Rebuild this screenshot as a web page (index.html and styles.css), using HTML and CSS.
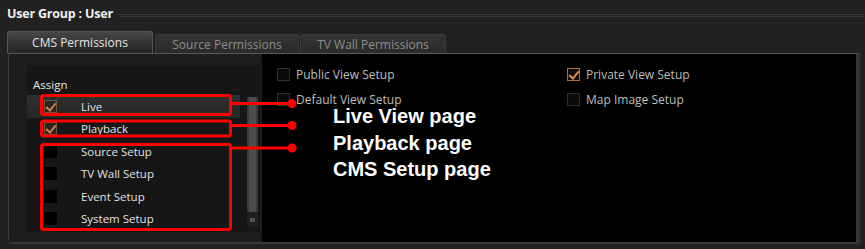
FILE: index.html
```html
<!DOCTYPE html>
<html>
<head>
<meta charset="utf-8">
<link rel="stylesheet" href="styles.css">
</head>
<body>
<div class="page">
  <div class="titlebar">
    <span class="title">User Group : User</span>
    <span class="rule"></span>
  </div>
  <div class="tabs">
    <div class="tab active">CMS Permissions</div>
    <div class="tab t2">Source Permissions</div>
    <div class="tab t3">TV Wall Permissions</div>
  </div>
  <div class="frame">
    <div class="left">
      <div class="assign">
        <div class="assign-label">Assign</div>
        <div class="list-wrap">
          <div class="list">
            <div class="row sel"><span class="cb on"></span><span class="lbl">Live</span></div>
            <div class="row"><span class="cb on"></span><span class="lbl">Playback</span></div>
            <div class="row"><span class="cb"></span><span class="lbl">Source Setup</span></div>
            <div class="row"><span class="cb"></span><span class="lbl">TV Wall Setup</span></div>
            <div class="row"><span class="cb"></span><span class="lbl">Event Setup</span></div>
            <div class="row"><span class="cb"></span><span class="lbl">System Setup</span></div>
          </div>
          <div class="scroll">
            <div class="track"></div>
            <div class="sbtn"><span></span></div>
          </div>
        </div>
      </div>
    </div>
    <div class="right">
      <div class="opts">
        <div class="opt"><span class="rcb"></span><span class="otxt">Public View Setup</span></div>
        <div class="opt"><span class="rcb on"></span><span class="otxt">Private View Setup</span></div>
        <div class="opt"><span class="rcb"></span><span class="otxt">Default View Setup</span></div>
        <div class="opt"><span class="rcb"></span><span class="otxt">Map Image Setup</span></div>
      </div>
    </div>
  </div>

  <svg class="marks" width="865" height="249" viewBox="0 0 865 249">
    <g fill="none" stroke="#ff0000" stroke-width="3">
      <rect x="41.5" y="95.5" width="189" height="19" rx="2"/>
      <rect x="41.5" y="121" width="189" height="15" rx="2"/>
      <rect x="41.5" y="144.5" width="189" height="85" rx="2"/>
      <line x1="231" y1="103.5" x2="292" y2="103.5"/>
      <line x1="231" y1="125.5" x2="292" y2="125.5"/>
      <line x1="231" y1="148" x2="292" y2="148"/>
    </g>
    <g fill="#ff0000">
      <circle cx="292" cy="103.5" r="4.5"/>
      <circle cx="292" cy="125.5" r="4.5"/>
      <circle cx="292" cy="148" r="4.5"/>
    </g>
  </svg>
  <div class="notes">
    <div class="note">Live View page</div>
    <div class="note">Playback page</div>
    <div class="note">CMS Setup page</div>
  </div>
</div>
</body>
</html>
```

FILE: styles.css
```css
html, body {
  margin: 0;
  padding: 0;
  background: #212121;
}
.page {
  position: relative;
  width: 865px;
  height: 249px;
  overflow: hidden;
  background: #212121;
  font-family: "Open Sans", "Noto Sans", sans-serif;
  color: #dcdcdc;
}
.titlebar {
  display: flex;
  align-items: center;
  height: 26px;
  padding-left: 7px;
}
.title {
  font-weight: 700;
  font-size: 12.5px;
  color: #f2f2f2;
  letter-spacing: -0.2px;
}
.rule {
  flex: 1;
  margin-left: 6px;
  margin-top: 4px;
  height: 1px;
  border-top: 1px solid #3e3e3e;
  border-bottom: 1px solid #353535;
}
.tabs {
  display: flex;
  align-items: flex-end;
  margin-top: 5px;
  padding-left: 7px;
  height: 22px;
}
.tab {
  box-sizing: border-box;
  display: flex;
  align-items: center;
  justify-content: center;
  font-size: 12px;
  color: #8d8d8d;
  height: 19px;
  width: 144px;
  margin-left: 2px;
  border: 1px solid #3a3a3a;
  border-bottom: none;
  border-radius: 3px 3px 0 0;
  background: linear-gradient(#333, #2a2a2a);
}
.tab.t3 { width: 146px; margin-left: 1px; }
.tab.active {
  margin-left: 0;
  width: 146px;
  height: 22px;
  color: #e4e4e4;
  border-color: #555;
  background: linear-gradient(#474747, #2c2c2c 70%, #262626);
}
.frame {
  display: flex;
  margin-left: 8px;
  width: 852px;
  height: 191px;
  box-sizing: border-box;
  border-top: 1px solid #5a5a5a;
  border-left: 1px solid #3c3c3c;
  border-right: 4px solid #363636;
  border-bottom: 2px solid #3a3a3a;
  border-bottom-left-radius: 6px;
  border-bottom-right-radius: 3px;
}
.left {
  width: 253px;
  background: #1d1d1d;
  padding: 11px 2px 0 18px;
  box-sizing: border-box;
}
.assign {
  height: 167px;
  background: #161616;
}
.assign-label {
  padding: 12px 0 0 6px;
  height: 18px;
  line-height: 16px;
  font-size: 11.5px;
  color: #e6e6e6;
}
.list-wrap {
  display: flex;
  gap: 7px;
}
.list {
  width: 213px;
}
.row {
  display: flex;
  align-items: center;
  height: 22.5px;
  padding-left: 17px;
  font-size: 11.5px;
}
.row.sel {
  background: linear-gradient(#2f2f2f, #262626);
}
.lbl {
  margin-left: 24px;
  color: #e2e2e2;
}
.cb {
  width: 13px;
  height: 13px;
  background: #000;
  box-sizing: border-box;
  position: relative;
}
.cb.on {
  background: #2a2420;
  border: 1px solid #6e5640;
}
.cb.on::after,
.rcb.on::after {
  content: "";
  position: absolute;
  left: 3px;
  top: 0px;
  width: 4px;
  height: 8px;
  border: solid #c78252;
  border-width: 0 2px 2px 0;
  transform: rotate(40deg);
}
.scroll {
  margin-top: 2px;
  width: 11px;
  display: flex;
  flex-direction: column;
}
.track {
  height: 115px;
  background: linear-gradient(90deg, #3a3a3a 0 2px, #4d4d4d 2px 9px, #3a3a3a 9px);
}
.sbtn {
  height: 15px;
  background: #1f1f1f;
  display: flex;
  align-items: center;
  justify-content: center;
}
.sbtn span {
  width: 5px;
  height: 4px;
  background: #555;
}
.right {
  flex: 1;
  background: #000;
  padding: 8px 0 0 15px;
  box-sizing: border-box;
}
.opts {
  display: grid;
  grid-template-columns: 290px auto;
  grid-auto-rows: 25px;
}
.opt {
  display: flex;
  align-items: center;
  font-size: 12px;
  color: #bdbdbd;
  gap: 6px;
}
.otxt {
  line-height: 12px;
}
.rcb {
  position: relative;
  width: 13px;
  height: 13px;
  box-sizing: border-box;
  border: 1px solid #303030;
  background: #0a0a0a;
}
.rcb.on {
  border-color: #b8683a;
  background: #140c08;
}
.rcb.on::after {
  border-color: #e0874e;
}
.marks {
  position: absolute;
  left: 0;
  top: 0;
  pointer-events: none;
}
.notes {
  position: absolute;
  left: 333px;
  top: 107px;
  font-family: "Liberation Sans", Arial, sans-serif;
  font-weight: 700;
  font-size: 20px;
  line-height: 18px;
  color: #fff;
}
.note + .note {
  margin-top: 8.5px;
}
```
